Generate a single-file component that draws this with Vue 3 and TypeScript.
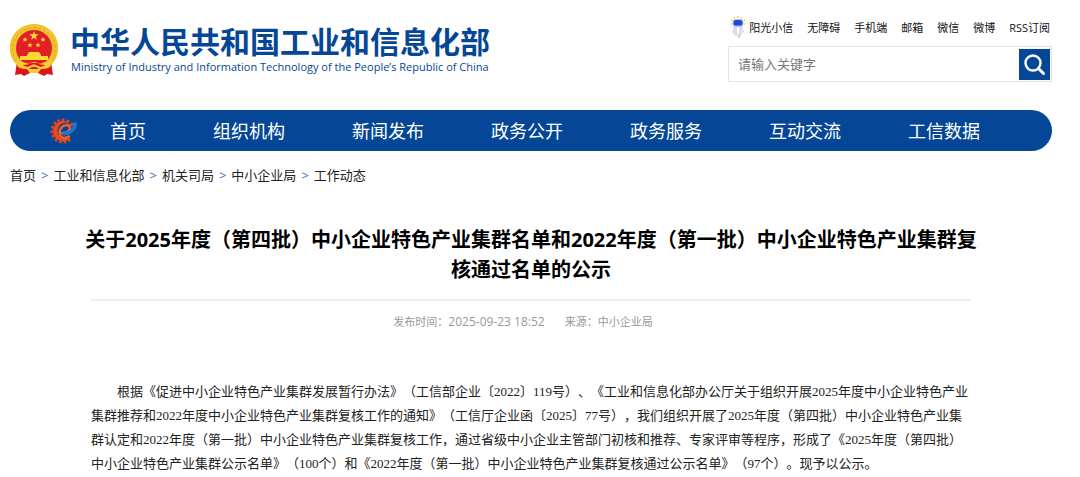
<script setup lang="ts">
interface Crumb {
  label: string
}

const quickLinks: string[] = ['阳光小信', '无障碍', '手机端', '邮箱', '微信', '微博', 'RSS订阅']
const navItems: string[] = ['首页', '组织机构', '新闻发布', '政务公开', '政务服务', '互动交流', '工信数据']
const crumbs: Crumb[] = [
  { label: '首页' },
  { label: '工业和信息化部' },
  { label: '机关司局' },
  { label: '中小企业局' },
  { label: '工作动态' },
]
const gearTeeth: number[] = [0, 26, 52, 146, 170, 194, 218, 242, 266, 290, 314, 337]
</script>

<template>
  <div class="page" lang="zh-CN">
    <header class="header">
      <a class="brand" href="#">
        <svg class="emblem" viewBox="0 0 48 54" aria-hidden="true">
          <path d="M7 38 5 51l6-1 3 2 6-3h8l6 3 3-2 6 1-2-13z" fill="#d8161b" />
          <path d="M24 0A24 24 0 0 0 5 39l5 4h28l5-4A24 24 0 0 0 24 0z" fill="#f3c32c" />
          <path d="M6 37A21.500 21.500 0 1 1 42 37" fill="none" stroke="#e0a41f" stroke-width="1" stroke-dasharray="3 2" />
          <circle cx="24" cy="24" r="18" fill="#e21f26" />
          <path d="m24 7 1.200 3.300h3.500l-2.800 2.100 1 3.400-2.900-2-2.900 2 1-3.400-2.800-2.100h3.500z" fill="#fbd935" />
          <g fill="#fbd935">
            <path d="m15 13 .8 1.700h1.800l-1.400 1.200.5 1.800-1.700-1-1.700 1 .5-1.800-1.400-1.200h1.800z" />
            <path d="m33 13 .8 1.700h1.800l-1.400 1.200.5 1.800-1.700-1-1.700 1 .5-1.800-1.400-1.200h1.800z" />
            <path d="m20 18.500.8 1.700h1.800l-1.400 1.200.5 1.800-1.700-1-1.700 1 .5-1.800-1.400-1.200h1.800z" />
            <path d="m28 18.500.8 1.700h1.800l-1.400 1.200.5 1.800-1.700-1-1.700 1 .5-1.800-1.400-1.200h1.800z" />
            <path d="M19 28h10l2 3v1h7v4H10v-4h7v-1z" />
          </g>
          <path d="M5 35c3 4 7 2 11 4 3 2 5-1 8-1s5 3 8 1c4-2 8 0 11-4l-3 8c-4 2-6 2-9 2l-3 4h-8l-3-4c-3 0-5 0-9-2z" fill="#f6cc33" />
          <path d="M13 41c4 0 6-1 8-2h6c2 1 4 2 8 2-2 2-5 2-7 1-2-2-6-2-8 0-2 1-5 1-7-1z" fill="#d8161b" />
          <path d="M19 45c3-3 7-3 10 0z" fill="#d8161b" />
        </svg>
        <span class="brand-text">
          <span class="brand-cn">中华人民共和国工业和信息化部</span>
          <span class="brand-en">Ministry of Industry and Information Technology of the People’s Republic of China</span>
        </span>
      </a>

      <div class="tools">
        <div class="quick">
          <svg class="mascot" viewBox="0 0 14 22" aria-hidden="true">
            <path d="M4 2.500 3 1M7 2V0M10 2.500 11 1M1.500 4.500 0 4M12.500 4.500 14 4M1 8H0M13 8h1" stroke="#f7cf55" stroke-width="1.500" />
            <path d="M3 10h8l2 6-2 1-1 3H8l-1-2-1 2H4l-2-3-1-1z" fill="#d3e1f7" />
            <path d="M6 11h2v6H6z" fill="#fff" />
            <rect x="1.500" y="3" width="11" height="8" rx="4" fill="#a9bdf0" />
            <rect x="2.500" y="4" width="9" height="5.500" rx="2.500" fill="#2448cf" />
            <circle cx="8" cy="20.500" r="1.200" fill="#f5c84b" />
          </svg>
          <a v-for="item in quickLinks" :key="item" href="#">{{ item }}</a>
        </div>
        <form class="search" @submit.prevent>
          <input type="text" placeholder="请输入关键字" aria-label="请输入关键字" />
          <button type="submit" aria-label="搜索">
            <svg viewBox="0 0 31 31" aria-hidden="true">
              <circle cx="14" cy="14" r="7.500" fill="none" stroke="#fff" stroke-width="2.400" />
              <path d="m19.500 19.500 5 5" stroke="#fff" stroke-width="3" stroke-linecap="round" />
            </svg>
          </button>
        </form>
      </div>
    </header>

    <nav class="nav">
      <svg class="gear" viewBox="0 0 28 28" aria-hidden="true">
        <g fill="#e2401f">
          <rect v-for="angle in gearTeeth" :key="angle" x="11.600" y="1.500" width="2.800" height="4" :transform="`rotate(${angle} 13 14)`" />
        </g>
        <path d="M20 21.500A10 10 0 1 1 21 8c-3-3-8-3-11 0-4 4-3 11 2 13 3 1 6 1 8 .5z" fill="#ea4a1e" />
        <path d="M9 16c5 1 11-1 11-5 0-3-5-4-8-1-4 4-3 10 2 11 2 0 4-.5 6-2" fill="none" stroke="#f0602a" stroke-width="2.400" />
        <path d="M11 18c8 2 16-3 16-12-2-1-3-1-4 0 1 5-4 9-12 10z" fill="#1878c8" />
      </svg>
      <a v-for="item in navItems" :key="item" href="#">{{ item }}</a>
    </nav>

    <div class="crumbs">
      <template v-for="(crumb, index) in crumbs" :key="crumb.label">
        <span v-if="index > 0" class="sep">&gt;</span>
        <a href="#">{{ crumb.label }}</a>
      </template>
    </div>

    <main class="article">
      <h1>关于2025年度（第四批）中小企业特色产业集群名单和2022年度（第一批）中小企业特色产业集群复核通过名单的公示</h1>
      <div class="body">
        <div class="meta">
          <span>发布时间：<time datetime="2025-09-23T18:52">2025-09-23 18:52</time></span>
          <span>来源：中小企业局</span>
        </div>
        <p>根据《促进中小企业特色产业集群发展暂行办法》（工信部企业〔2022〕119号）、《工业和信息化部办公厅关于组织开展2025年度中小企业特色产业集群推荐和2022年度中小企业特色产业集群复核工作的通知》（工信厅企业函〔2025〕77号），我们组织开展了2025年度（第四批）中小企业特色产业集群认定和2022年度（第一批）中小企业特色产业集群复核工作，通过省级中小企业主管部门初核和推荐、专家评审等程序，形成了《2025年度（第四批）中小企业特色产业集群公示名单》（100个）和《2022年度（第一批）中小企业特色产业集群复核通过公示名单》（97个）。现予以公示。</p>
      </div>
    </main>
  </div>
</template>

<style>
body {
  margin: 0;
  background: #fff;
}
</style>

<style scoped>
.page {
  padding: 16px 28px 0 10px;
  font-family: "Open Sans", "Noto Sans CJK SC", sans-serif;
  color: #222;
  text-spacing-trim: space-all;
}
a {
  color: inherit;
  text-decoration: none;
}
.header {
  display: flex;
  justify-content: space-between;
  align-items: flex-start;
}
.brand {
  display: flex;
  gap: 12px;
  padding-top: 8px;
  color: #054796;
}
.emblem {
  width: 48px;
  height: 54px;
}
.brand-text {
  display: flex;
  flex-direction: column;
  white-space: nowrap;
}
.brand-cn {
  font-size: 30px;
  line-height: 36px;
  font-weight: 700;
}
.brand-en {
  padding-left: 1px;
  font-family: "Open Sans", sans-serif;
  font-size: 11px;
  line-height: 14px;
  font-weight: 500;
}
.tools {
  width: 324px;
}
.quick {
  display: flex;
  justify-content: flex-end;
  align-items: center;
  gap: 14px;
  height: 22px;
  padding-right: 2px;
  font-size: 11px;
  color: #111;
  white-space: nowrap;
}
.mascot {
  width: 14px;
  height: 22px;
  margin-right: -10px;
}
.search {
  display: flex;
  box-sizing: border-box;
  height: 36px;
  margin-top: 8px;
  padding: 2px 1px;
  border: 1px solid #e4e4e4;
}
.search input {
  flex: 1;
  min-width: 0;
  padding: 0 8px;
  border: 0;
  outline: 0;
  font: 13px "Open Sans", "Noto Sans CJK SC", sans-serif;
}
.search input::placeholder {
  color: #777;
}
.search button {
  width: 31px;
  height: 31px;
  padding: 0;
  border: 0;
  background: #054796;
}
.search svg {
  display: block;
}
.nav {
  display: flex;
  align-items: center;
  gap: 67px;
  height: 41px;
  margin-top: 28px;
  padding-left: 40px;
  border-radius: 21px;
  background: #054796;
  color: #fff;
  font-size: 18px;
  line-height: 24px;
  white-space: nowrap;
}
.gear {
  width: 28px;
  height: 28px;
  margin-right: -35px;
}
.crumbs {
  display: flex;
  gap: 5px;
  margin-top: 14px;
  font-size: 13px;
  line-height: 20px;
}
.sep {
  color: #3a6fb5;
}
.article {
  display: flex;
  flex-direction: column;
  align-items: center;
  margin-top: 40px;
}
h1 {
  max-width: 896px;
  margin: 0;
  font-size: 20px;
  line-height: 30px;
  font-weight: 700;
  color: #000;
  text-align: center;
}
.body {
  max-width: 880px;
  margin-top: 14px;
  border-top: 2px solid #eee;
}
.meta {
  display: flex;
  justify-content: center;
  gap: 20px;
  margin-top: 11px;
  padding-right: 16px;
  font-size: 11px;
  line-height: 20px;
  color: #999;
}
.meta time {
  font-size: 12px;
}
p {
  margin: 48px 0 0;
  font-family: "Liberation Serif", "Noto Sans CJK SC", serif;
  font-size: 13px;
  line-height: 24px;
  text-indent: 2em;
}
</style>
